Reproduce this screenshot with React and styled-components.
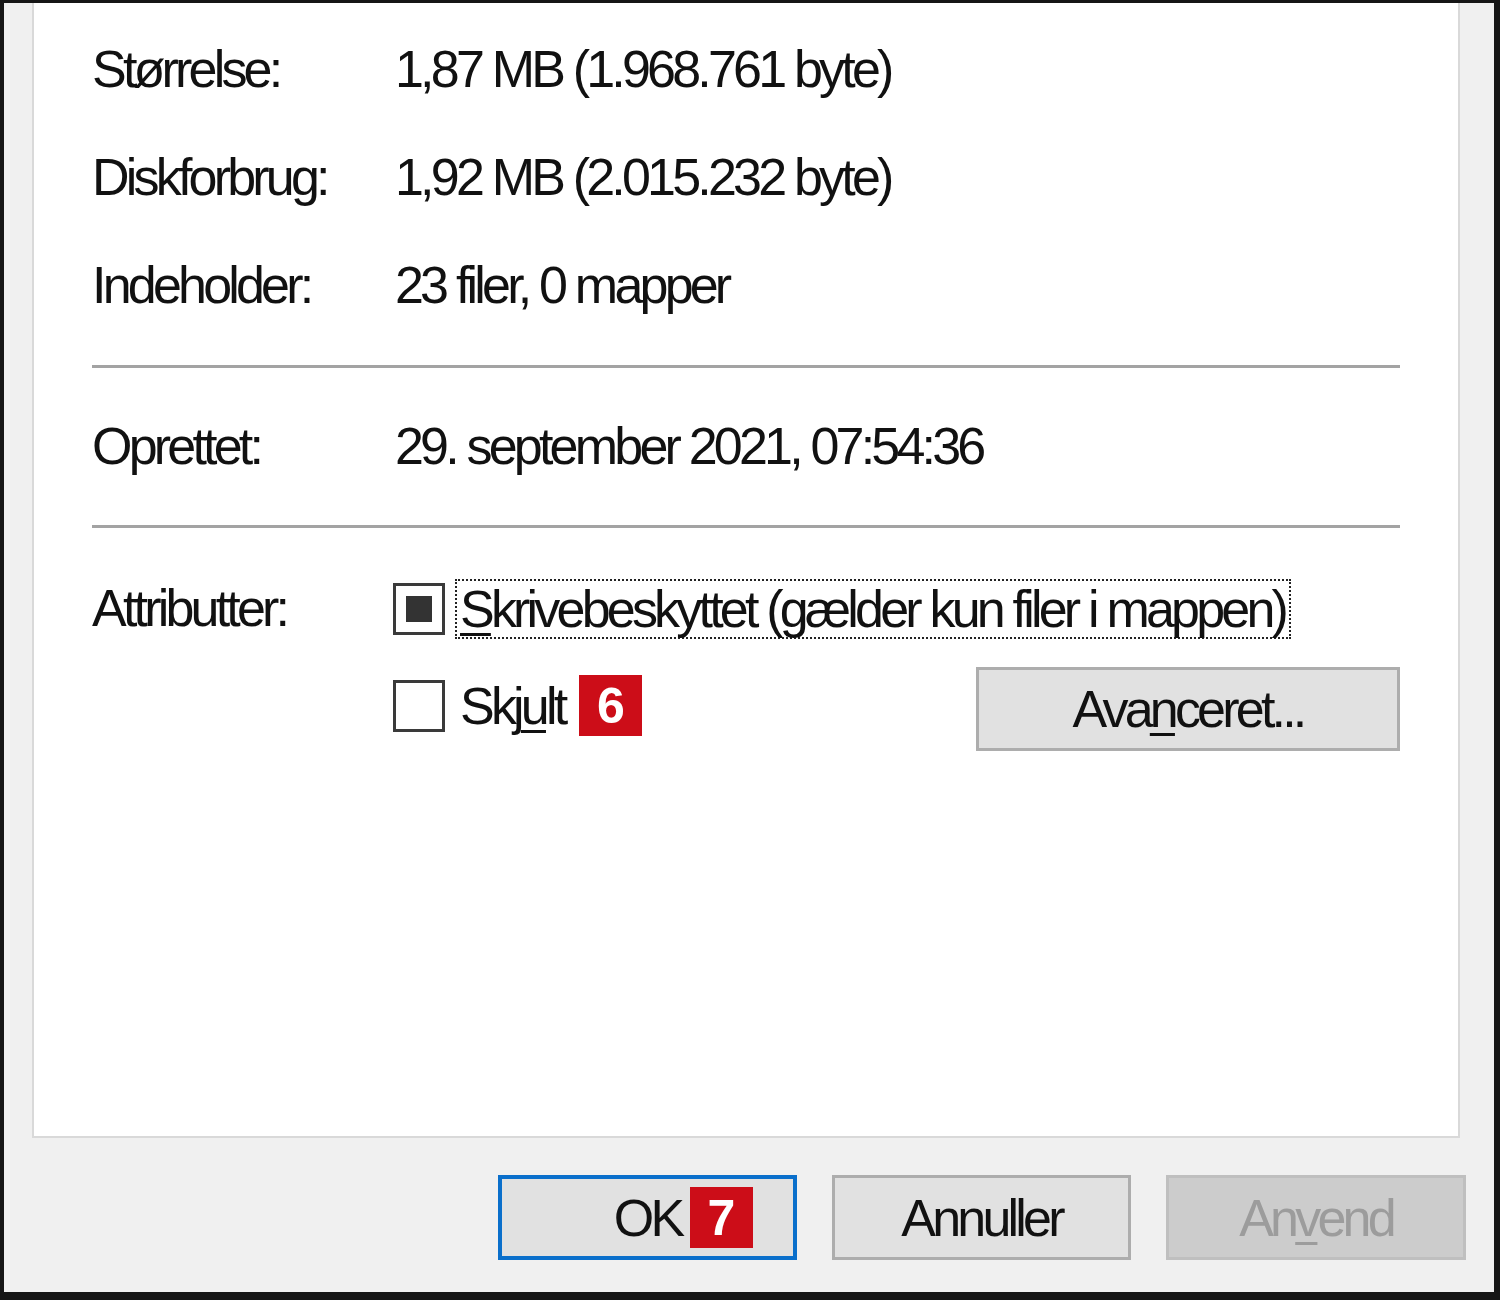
import React from "react";
import styled, { createGlobalStyle } from "styled-components";

const Global = createGlobalStyle`
  body {
    margin: 0;
    font-family: "Liberation Sans", Arial, sans-serif;
    color: #111;
  }
`;

const Frame = styled.div`
  width: 1500px;
  height: 1300px;
  box-sizing: border-box;
  border-style: solid;
  border-color: #161616;
  border-width: 3px 6px 8px 4px;
  background: #f0f0f0;
  display: flex;
  flex-direction: column;
  font-size: 52px;
  letter-spacing: -3.8px;
`;

const Panel = styled.div`
  flex: 1;
  margin: 0 34px 0 28px;
  padding: 12px 58px 0 58px;
  background: #fff;
  border: 2px solid #d9d9d9;
  border-top: none;
`;

const InfoRow = styled.div`
  display: grid;
  grid-template-columns: 301px 1fr;
  height: ${({ $h }) => $h || 108}px;
  line-height: ${({ $h }) => $h || 108}px;
  align-items: center;
`;

const Label = styled.span`
  white-space: nowrap;
`;

const Value = styled.span`
  white-space: nowrap;
  padding-left: 2px;
`;

const Separator = styled.div`
  height: 3px;
  background: #a3a3a3;
  margin: ${({ $top }) => $top}px 0 ${({ $bottom }) => $bottom}px;
`;

const Attributes = styled.div`
  margin-top: 32px;
`;

const AttrCell = styled.div`
  display: flex;
  align-items: center;
  line-height: normal;
`;

const Box = styled.span`
  width: 52px;
  height: 52px;
  box-sizing: border-box;
  border: 3px solid #3a3a3a;
  background: #fff;
  display: flex;
  align-items: center;
  justify-content: center;
  flex-shrink: 0;
  &::after {
    content: "";
    display: ${({ $mixed }) => ($mixed ? "block" : "none")};
    width: 26px;
    height: 26px;
    background: #333;
  }
`;

const Focus = styled.span`
  margin-left: 10px;
  height: 60px;
  box-sizing: border-box;
  border: 2px dotted #222;
  padding: 0 4px 0 3px;
  display: flex;
  align-items: center;
  white-space: nowrap;
`;

const Plain = styled.span`
  margin-left: 15px;
  white-space: nowrap;
`;

const Key = styled.u`
  text-decoration-thickness: 3px;
  text-underline-offset: 6px;
`;

const Badge = styled.span`
  width: 63px;
  height: 61px;
  background: #cc0d18;
  color: #fff;
  font-weight: bold;
  font-size: 50px;
  letter-spacing: 0;
  display: inline-flex;
  align-items: center;
  justify-content: center;
  flex-shrink: 0;
`;

const InlineBadge = styled(Badge)`
  margin-left: 15px;
`;

const OverBadge = styled(Badge)`
  position: absolute;
  left: 188px;
  top: 8px;
`;

const Button = styled.div`
  position: relative;
  width: ${({ $w }) => $w || 299}px;
  height: 85px;
  box-sizing: border-box;
  border: ${({ $default }) => ($default ? "4px solid #0a6fcb" : "3px solid #adadad")};
  background: ${({ $disabled }) => ($disabled ? "#cccccc" : "#e1e1e1")};
  border-color: ${({ $disabled }) => ($disabled ? "#bfbfbf" : undefined)};
  color: ${({ $disabled }) => ($disabled ? "#9c9c9c" : "#111")};
  display: flex;
  align-items: center;
  justify-content: center;
  white-space: nowrap;
  flex-shrink: 0;
`;

const AdvancedButton = styled(Button)`
  margin-left: auto;
  height: 84px;
  margin-top: 6px;
`;

const Footer = styled.div`
  height: 154px;
  box-sizing: border-box;
  padding: 37px 28px 0 0;
  display: flex;
  justify-content: flex-end;
  gap: 35px;
`;

const info = [
  ["Størrelse:", "1,87 MB (1.968.761 byte)"],
  ["Diskforbrug:", "1,92 MB (2.015.232 byte)"],
  ["Indeholder:", "23 filer, 0 mapper"],
];

export default function App() {
  return (
    <>
      <Global />
      <Frame>
        <Panel>
          {info.map(([label, value]) => (
            <InfoRow key={label}>
              <Label>{label}</Label>
              <Value>{value}</Value>
            </InfoRow>
          ))}

          <Separator $top={26} $bottom={24} />

          <InfoRow>
            <Label>Oprettet:</Label>
            <Value>29. september 2021, 07:54:36</Value>
          </InfoRow>

          <Separator $top={25} $bottom={0} />

          <Attributes>
            <InfoRow $h={97}>
              <Label>Attributter:</Label>
              <AttrCell>
                <Box $mixed />
                <Focus>
                  <Key>S</Key>krivebeskyttet (gælder kun filer i mappen)
                </Focus>
              </AttrCell>
            </InfoRow>
            <InfoRow $h={97}>
              <span />
              <AttrCell>
                <Box />
                <Plain>
                  Skj<Key>u</Key>lt
                </Plain>
                <InlineBadge>6</InlineBadge>
                <AdvancedButton $w={424}>
                  Ava<Key>n</Key>ceret...
                </AdvancedButton>
              </AttrCell>
            </InfoRow>
          </Attributes>
        </Panel>

        <Footer>
          <Button $default>
            OK
            <OverBadge>7</OverBadge>
          </Button>
          <Button>Annuller</Button>
          <Button $disabled $w={300}>
            An<Key>v</Key>end
          </Button>
        </Footer>
      </Frame>
    </>
  );
}
